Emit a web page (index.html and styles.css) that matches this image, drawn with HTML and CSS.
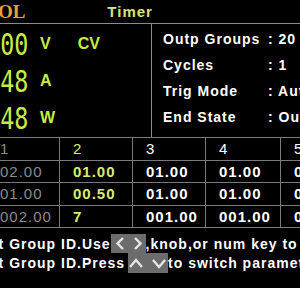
FILE: index.html
```html
<!DOCTYPE html>
<html lang="en">
  <head>
    <meta charset="UTF-8" />
    <meta name="viewport" content="width=device-width, initial-scale=1.0" />
    <title>Timer</title>
    <link rel="stylesheet" href="styles.css">
  </head>
  <body>
    <!-- Title bar -->
    <header class="top">
      <span class="logo">RIGOL</span>
      <span class="title">Timer</span>
    </header>

    <!-- Readouts and timer settings -->
    <section class="main">
      <div class="readouts">
        <div class="readout">
          <span class="digits"><span>30.00</span></span>
          <span class="unit">V</span>
          <span class="mode">CV</span>
        </div>
        <div class="readout">
          <span class="digits"><span>0.048</span></span>
          <span class="unit">A</span>
        </div>
        <div class="readout">
          <span class="digits"><span>1.448</span></span>
          <span class="unit">W</span>
        </div>
      </div>
      <div class="info">
        <div class="line"><span class="label">Outp Groups</span><span>: 20</span></div>
        <div class="line"><span class="label">Cycles</span><span>: 1</span></div>
        <div class="line"><span class="label">Trig Mode</span><span>: Auto</span></div>
        <div class="line"><span class="label">End State</span><span>: Output Off</span></div>
      </div>
    </section>

    <!-- Groups table -->
    <table class="groups">
      <colgroup>
        <col class="c1"><col class="c2"><col class="c3"><col class="c4"><col class="c5">
      </colgroup>
      <tr class="head">
        <td class="old">1</td>
        <td class="sel">2</td>
        <td>3</td>
        <td>4</td>
        <td>5</td>
      </tr>
      <tr>
        <td class="old">02.00</td>
        <td class="sel">01.00</td>
        <td>01.00</td>
        <td>01.00</td>
        <td>01.00</td>
      </tr>
      <tr>
        <td class="old">01.00</td>
        <td class="sel">00.50</td>
        <td>01.00</td>
        <td>01.00</td>
        <td>01.00</td>
      </tr>
      <tr>
        <td class="old">002.00</td>
        <td class="sel">7</td>
        <td>001.00</td>
        <td>001.00</td>
        <td>001.00</td>
      </tr>
    </table>

    <!-- Help text -->
    <div class="help">
      <div class="help-line">
        Select Group ID.Use<span class="key key-lr"><svg width="35" height="19" viewBox="0 0 35 19"><path d="M12 4 L6.5 9.5 L12 15 M24 4 L29.5 9.5 L24 15" fill="none" stroke="#e6e6e6" stroke-width="2.4"/></svg></span>,knob,or num key to set
      </div>
      <div class="help-line">
        Select Group ID.Press<span class="key key-ud"><svg width="40" height="20" viewBox="0 0 40 20"><path d="M2 14 L8 7 L14 14 M25 7 L31 14 L37 7" fill="none" stroke="#e6e6e6" stroke-width="2.4"/></svg></span>to switch parameter
      </div>
    </div>
  </body>
</html>
```

FILE: styles.css
```css
html,
body {
  margin: 0;
  background-color: #000;
}

body {
  width: 300px;
  height: 288px;
  overflow: hidden;
  font-family: "Liberation Sans", Arial, sans-serif;
  color: #fff;
}

/* Title bar */
.top {
  height: 23px;
  border-bottom: 1px solid #8c8c8c;
  display: flex;
  align-items: center;
  white-space: nowrap;
}

.logo {
  margin-left: -38px;
  font-family: "Liberation Serif", serif;
  font-weight: bold;
  font-size: 19px;
  color: #eaa030;
}

.title {
  margin-left: 82px;
  font-size: 15px;
  font-weight: bold;
  letter-spacing: 1px;
  color: #d6e27c;
}

/* Readouts */
.main {
  display: flex;
  height: 113px;
}

.readouts {
  width: 151px;
  flex-shrink: 0;
  padding-top: 2px;
  color: #c6ec40;
}

.readout {
  display: flex;
  align-items: flex-start;
  height: 37px;
  padding-top: 7px;
  box-sizing: border-box;
}

.digits {
  width: 28px;
  height: 24px;
  overflow: hidden;
  display: flex;
  justify-content: flex-end;
  flex-shrink: 0;
}

.digits span {
  display: inline-block;
  font-family: "DejaVu Sans Mono", monospace;
  font-size: 30px;
  line-height: 24px;
  transform: scaleX(0.78);
  transform-origin: right center;
}

.unit {
  margin-left: 12px;
  margin-top: 2px;
  font-size: 16px;
  font-weight: bold;
}

.mode {
  margin-left: 27px;
  margin-top: 2px;
  font-size: 16px;
  font-weight: bold;
}

/* Timer settings box */
.info {
  flex: 1;
  min-width: 0;
  overflow: hidden;
  border-left: 1px solid #8c8c8c;
  padding: 2px 0 0 11px;
  white-space: nowrap;
}

.info .line {
  display: flex;
  align-items: center;
  height: 26px;
  font-size: 14px;
  font-weight: bold;
  letter-spacing: 1px;
}

.info .label {
  width: 105px;
  flex-shrink: 0;
}

/* Groups table */
.groups {
  border-collapse: collapse;
  table-layout: fixed;
  width: 369px;
  margin-left: -14px;
}

.c1,
.c2,
.c3 {
  width: 73px;
}

.c4,
.c5 {
  width: 75px;
}

.groups td {
  border: 1px solid #7a7a7a;
  height: 21.5px;
  padding: 0 0 0 13px;
  font-size: 15px;
  font-weight: bold;
  letter-spacing: 1px;
  white-space: nowrap;
  overflow: hidden;
}

.groups .head td {
  font-weight: normal;
}

.groups td.old {
  color: #8c8c8c;
  font-weight: normal;
}

.groups td.sel {
  color: #d6ee6c;
}

/* Help */
.help {
  margin-top: 6px;
  margin-left: -43px;
}

.help-line {
  display: flex;
  align-items: center;
  height: 19px;
  white-space: nowrap;
  font-size: 14px;
  font-weight: bold;
  letter-spacing: 1px;
}

.help-line + .help-line {
  height: 20px;
}

.key {
  display: inline-flex;
  background-color: #6c6c6c;
  flex-shrink: 0;
}

.key-ud {
  margin-left: 3px;
}
```
